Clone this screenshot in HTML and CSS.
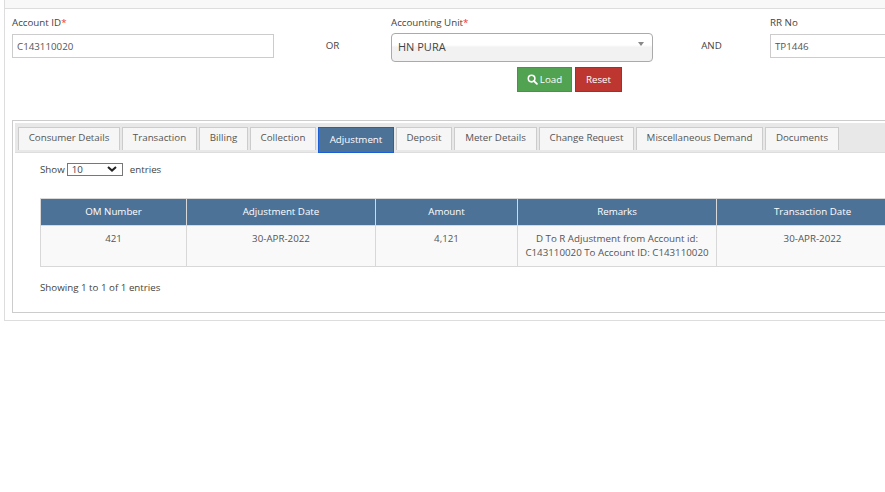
FILE: index.html
```html
<!DOCTYPE html>
<html lang="en">
<head>
<meta charset="utf-8">
<title>Adjustment</title>
<link rel="stylesheet" href="styles.css">
</head>
<body>
<div class="page">
  <div class="panel">
    <div class="panel-top"></div>
    <div class="panel-body">
      <div class="form-row">
        <div class="field">
          <label class="label">Account ID<span class="req">*</span></label>
          <div class="input">C143110020</div>
        </div>
        <div class="joiner">OR</div>
        <div class="field">
          <label class="label">Accounting Unit<span class="req">*</span></label>
          <div class="select"><span>HN PURA</span><i class="caret"></i></div>
        </div>
        <div class="joiner">AND</div>
        <div class="field">
          <label class="label">RR No</label>
          <div class="input">TP1446</div>
        </div>
      </div>
      <div class="actions">
        <button class="btn btn-load" type="button">
          <svg class="search" viewBox="0 0 12 12" width="11" height="11"><circle cx="5" cy="5" r="3.6" fill="none" stroke="#fff" stroke-width="1.7"/><path d="M7.7 7.7 10.8 10.8" stroke="#fff" stroke-width="2" stroke-linecap="round"/></svg>
          Load
        </button>
        <button class="btn btn-reset" type="button">Reset</button>
      </div>
      <div class="tabs-box">
        <div class="tabbar">
          <a class="tab w1">Consumer Details</a>
          <a class="tab w2">Transaction</a>
          <a class="tab w3">Billing</a>
          <a class="tab w4">Collection</a>
          <a class="tab active w5">Adjustment</a>
          <a class="tab w6">Deposit</a>
          <a class="tab w7">Meter Details</a>
          <a class="tab w8">Change Request</a>
          <a class="tab w9">Miscellaneous Demand</a>
          <a class="tab w10">Documents</a>
        </div>
        <div class="tab-content">
          <div class="length">
            <span>Show</span>
            <div class="length-select">
              <span>10</span>
              <svg viewBox="0 0 10 6" width="10" height="6"><path d="M1 1 5 4.6 9 1" fill="none" stroke="#222" stroke-width="2"/></svg>
            </div>
            <span class="entries">entries</span>
          </div>
          <table class="grid">
            <thead>
              <tr>
                <th class="c1">OM Number</th>
                <th class="c2">Adjustment Date</th>
                <th class="c3">Amount</th>
                <th class="c4">Remarks</th>
                <th class="c5">Transaction Date</th>
              </tr>
            </thead>
            <tbody>
              <tr>
                <td>421</td>
                <td>30-APR-2022</td>
                <td>4,121</td>
                <td>D To R Adjustment from Account id: C143110020 To Account ID: C143110020</td>
                <td>30-APR-2022</td>
              </tr>
            </tbody>
          </table>
          <div class="info">Showing 1 to 1 of 1 entries</div>
        </div>
      </div>
    </div>
  </div>
</div>
</body>
</html>
```
FILE: styles.css
```css
* { box-sizing: border-box; }
html, body { margin: 0; padding: 0; background: #fff; }
body {
  font-family: "Open Sans", sans-serif;
  font-size: 9.75px;
  color: #444;
  height: 492px;
  overflow: hidden;
}
.page { width: 885px; height: 492px; overflow: hidden; padding-left: 4px; }
.panel {
  width: 1100px;
  height: 321px;
  border: 1px solid #ddd;
  border-top: 0;
}
.panel-top { height: 9px; background: #f8f8f8; border-bottom: 1px solid #ddd; }
.panel-body { padding: 0 0 0 7px; }
.form-row {
  display: grid;
  grid-template-columns: 262px 117px 262px 117px 262px;
  height: 53px;
}
.field { display: flex; flex-direction: column; }
.label { line-height: 14px; margin-top: 7px; height: 18px; color: #444; }
.req { color: #e33; }
.input {
  height: 24px;
  border: 1px solid #ccc;
  padding-left: 4px;
  line-height: 23px;
  color: #555;
}
.select {
  height: 29px;
  margin-top: -1px;
  border: 1px solid #aaa;
  border-radius: 4px;
  background: linear-gradient(#fff 0, #fff 40%, #f2f2f2 50%, #f2f2f2 100%);
  padding-left: 6px;
  line-height: 25px;
  font-size: 11px;
  display: flex;
  justify-content: space-between;
  color: #444;
}
.caret {
  width: 0; height: 0;
  margin: 8px 8px 0 0;
  border-left: 3px solid transparent;
  border-right: 3px solid transparent;
  border-top: 4px solid #888;
}
.joiner { text-align: center; line-height: 14px; padding-top: 30px; color: #444; }
.actions { display: flex; gap: 3px; padding-left: 505px; margin-top: 5px; height: 25px; }
.btn {
  font-family: inherit;
  font-size: 9.75px;
  color: #fff;
  height: 25px;
  padding: 0;
  display: flex;
  align-items: center;
  justify-content: center;
  gap: 1px;
  border-radius: 0;
}
.btn-load { width: 55px; background: #51a351; border: 1px solid #46944a; }
.btn-reset { width: 47px; background: #bd362f; border: 1px solid #a52e28; }
.search { margin-right: 1px; }
.tabs-box {
  margin-top: 28px;
  width: 1080px;
  height: 193px;
  border: 1px solid #ccc;
  border-right: 0;
  padding: 2px 0 0 2px;
}
.tabbar {
  display: flex;
  gap: 2px;
  height: 30px;
  background: #e8e8e8;
  border-bottom: 1px solid #ddd;
  padding: 4px 0 0 3px;
  align-items: flex-start;
}
.tab {
  height: 23px;
  background: #f6f6f6;
  border: 1px solid #ccc;
  border-bottom: 0;
  text-align: center;
  line-height: 20px;
  color: #555;
  flex: none;
}
.tab.active {
  height: 26px;
  background: #4d7298;
  border: 1px solid #1a5fd8;
  color: #fff;
  line-height: 23px;
}
.w1 { width: 102px; }
.w2 { width: 75px; }
.w3 { width: 49px; }
.w4 { width: 66px; }
.w5 { width: 76px; }
.w6 { width: 56px; }
.w7 { width: 83px; }
.w8 { width: 95px; }
.w9 { width: 127px; }
.w10 { width: 74px; }
.tab-content { padding: 8px 0 0 25px; }
.length { display: flex; align-items: center; height: 16px; }
.length-select {
  width: 56px;
  height: 13px;
  margin-left: 2px;
  padding: 0 5px 0 4px;
  display: flex;
  align-items: center;
  justify-content: space-between;
  line-height: 11px;
  border: 1px solid #777;
  background: #fff;
  color: #444;
}
.entries { margin-left: 7px; }
.grid {
  margin-top: 21px;
  border-collapse: collapse;
  table-layout: fixed;
  width: 868px;
}
.grid th {
  height: 27px;
  padding: 0 0 2px;
  background: #4d7298;
  color: #fff;
  font-weight: 400;
  border: 1px solid #d8d8d8;
  text-align: center;
}
.grid td {
  height: 41px;
  padding: 6px 4px 0;
  background: #f9f9f9;
  border: 1px solid #d8d8d8;
  text-align: center;
  vertical-align: top;
  line-height: 14px;
  color: #555;
}
.c1 { width: 146px; }
.c2 { width: 189px; }
.c3 { width: 142px; }
.c4 { width: 199px; }
.c5 { width: 192px; }
.info { margin-top: 14px; line-height: 14px; }
```
